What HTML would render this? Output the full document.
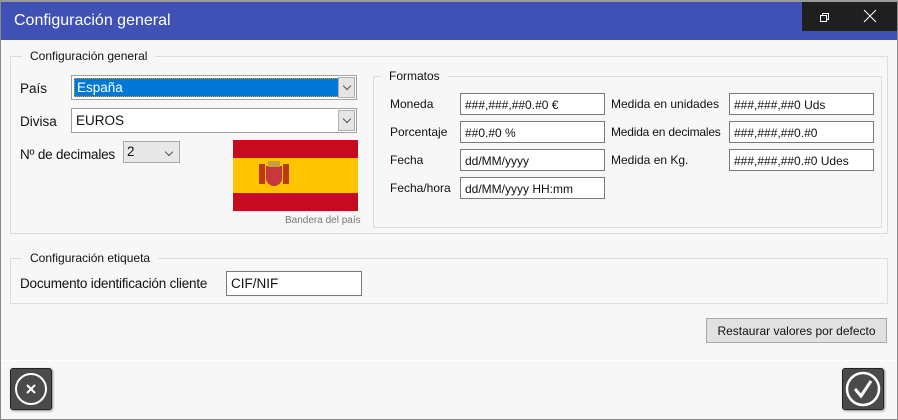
<!DOCTYPE html>
<html><head><meta charset="utf-8"><style>
*{box-sizing:border-box}
body{margin:0;width:898px;height:420px;background:#f7f7f7;font-family:"Liberation Sans",sans-serif;font-size:13px;color:#111;position:relative;overflow:hidden}
.a{position:absolute}
.win{left:0;top:0;width:898px;height:420px;border:1px solid #8a8a8a;border-top:2px solid #9a9a9a}
.title{left:1px;top:2px;width:896px;height:38px;background:#3f51b5;color:#fff;font-size:16px;padding:10px 0 0 13px}
.tb{left:802px;top:2px;width:95px;height:29px;background:#1f1f1f}
.grp{border:1px solid #dcdcdc}
.lg{background:#f7f7f7;padding:0 8px;font-size:12px}
.inp{background:#fff;border:1px solid #7a7a7a;height:22px;font-size:12px;padding:4px 4px;white-space:nowrap;overflow:hidden}
.lbl{font-size:12px}
.cmb{background:#fff;border:1px solid #a0a0a0}
.dd{position:absolute;right:1px;top:1px;bottom:1px;width:17px;background:#e5e5e5;border:1px solid #b0b0b0}
.dd:after,.ch:after{content:"";position:absolute;left:5px;top:5px;width:5px;height:5px;border-right:1px solid #555;border-bottom:1px solid #555;transform:rotate(45deg)}
.btn{border:1px solid #a8a8a8;background:#e1e1e1;font-size:12px;text-align:center;padding-top:5px}
.ib{width:42px;height:42px;background:#4a4a4a;border:1px solid #222;border-radius:3px;box-shadow:1px 1px 2px #888}
</style></head><body>
<div class="a win"></div>
<div class="a title">Configuración general</div>
<div class="a tb"></div>
<svg class="a" style="left:818px;top:11px" width="12" height="12"><path d="M2.5 4.5h6v6h-6z M4.5 4.5v-2h6v6h-2" fill="none" stroke="#fff"/></svg>
<svg class="a" style="left:863px;top:9px" width="14" height="14"><path d="M1 1L13 13M13 1L1 13" stroke="#fff" stroke-width="1"/></svg>

<div class="a grp" style="left:10px;top:56px;width:878px;height:178px"></div>
<div class="a lg" style="left:22px;top:49px">Configuración general</div>

<div class="a lbl" style="left:20px;top:81px;font-size:13.5px">País</div>
<div class="a cmb" style="left:71px;top:75px;width:286px;height:25px"><div class="a" style="left:2px;top:2px;width:265px;height:19px;background:#0078d7;color:#fff;font-size:13.5px;padding:1px 2px;border:1px dotted #e0a040">España</div><div class="dd"></div></div>
<div class="a lbl" style="left:20px;top:114px;font-size:13.5px">Divisa</div>
<div class="a cmb" style="left:71px;top:108px;width:286px;height:25px"><div class="a" style="left:4px;top:4px;font-size:13.5px">EUROS</div><div class="dd"></div></div>
<div class="a lbl" style="left:20px;top:147px;font-size:13.5px;letter-spacing:-0.2px">Nº de decimales</div>
<div class="a" style="left:123px;top:141px;width:57px;height:22px;background:#e8e8e8;border:1px solid #a8a8a8"><div class="a" style="left:3px;top:2px;font-size:13.5px">2</div><div class="a ch" style="left:37px;top:2px;width:16px;height:16px"></div></div>

<div class="a" style="left:233px;top:140px;width:125px;height:71px;background:#c60b1e"><div class="a" style="left:0;top:18px;width:125px;height:35px;background:#ffc400"></div>
<div class="a" style="left:26px;top:24px;width:6px;height:20px;background:#ad1519;opacity:.8"></div><div class="a" style="left:50px;top:24px;width:6px;height:20px;background:#ad1519;opacity:.8"></div><div class="a" style="left:33px;top:26px;width:16px;height:20px;background:#c8373b;border-radius:0 0 8px 8px"></div><div class="a" style="left:35px;top:21px;width:12px;height:6px;background:#c8a040"></div></div>
<div class="a" style="left:285px;top:215px;font-size:10px;color:#777">Bandera del país</div>

<div class="a grp" style="left:373px;top:76px;width:509px;height:152px"></div>
<div class="a lg" style="left:381px;top:69px">Formatos</div>
<div class="a lbl" style="left:390px;top:97px">Moneda</div>
<div class="a lbl" style="left:390px;top:125px">Porcentaje</div>
<div class="a lbl" style="left:390px;top:153px">Fecha</div>
<div class="a lbl" style="left:390px;top:181px">Fecha/hora</div>
<div class="a inp" style="left:460px;top:93px;width:145px">###,###,##0.#0 €</div>
<div class="a inp" style="left:460px;top:121px;width:145px">##0.#0 %</div>
<div class="a inp" style="left:460px;top:149px;width:145px">dd/MM/yyyy</div>
<div class="a inp" style="left:460px;top:177px;width:145px">dd/MM/yyyy HH:mm</div>
<div class="a lbl" style="left:611px;top:97px">Medida en unidades</div>
<div class="a lbl" style="left:611px;top:125px;letter-spacing:-0.2px">Medida en decimales</div>
<div class="a lbl" style="left:611px;top:153px">Medida en Kg.</div>
<div class="a inp" style="left:729px;top:93px;width:145px">###,###,##0 Uds</div>
<div class="a inp" style="left:729px;top:121px;width:145px">###,###,##0.#0</div>
<div class="a inp" style="left:729px;top:149px;width:145px">###,###,##0.#0 Udes</div>

<div class="a grp" style="left:10px;top:258px;width:878px;height:46px"></div>
<div class="a lg" style="left:22px;top:251px">Configuración etiqueta</div>
<div class="a lbl" style="left:20px;top:276px;font-size:13.5px;letter-spacing:-0.2px">Documento identificación cliente</div>
<div class="a inp" style="left:226px;top:271px;width:136px;height:25px;font-size:13.5px">CIF/NIF</div>

<div class="a btn" style="left:706px;top:318px;width:181px;height:25px">Restaurar valores por defecto</div>
<div class="a" style="left:1px;top:360px;width:896px;height:1px;background:#fff"></div>

<div class="a ib" style="left:10px;top:368px"><svg width="40" height="40"><circle cx="20" cy="20" r="15" fill="none" stroke="#fff" stroke-width="2"/><path d="M16 16L24 24M24 16L16 24" stroke="#fff" stroke-width="2"/></svg></div>
<div class="a ib" style="left:842px;top:368px"><svg width="40" height="40"><circle cx="20" cy="20" r="16" fill="none" stroke="#fff" stroke-width="2.5"/><path d="M12 20L18 27L28 12" fill="none" stroke="#fff" stroke-width="3"/></svg></div>
</body></html>
